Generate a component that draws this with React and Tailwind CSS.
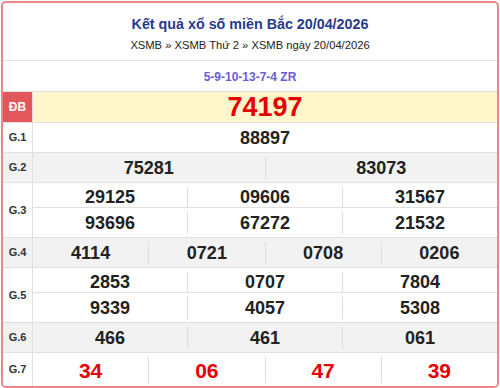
const ROW_LINE = "border-b border-[#e0e0e0]";

const prizes = [
  { label: "G.1", rows: [["88897"]], bg: "bg-white" },
  { label: "G.2", rows: [["75281", "83073"]], bg: "bg-[#f2f2f2]" },
  { label: "G.3", rows: [["29125", "09606", "31567"], ["93696", "67272", "21532"]], bg: "bg-white" },
  { label: "G.4", rows: [["4114", "0721", "0708", "0206"]], bg: "bg-[#f2f2f2]" },
  { label: "G.5", rows: [["2853", "0707", "7804"], ["9339", "4057", "5308"]], bg: "bg-white" },
  { label: "G.6", rows: [["466", "461", "061"]], bg: "bg-[#f2f2f2]" },
  { label: "G.7", rows: [["34", "06", "47", "39"]], bg: "bg-white", red: true, last: true },
];

const Cell = ({ value, first, red, top }) => (
  <div
    className={`flex-1 flex items-center justify-center mt-1 ${top ? "mb-0" : "mb-[3px]"} ${
      first ? "" : "border-l border-[#dddddd]"
    }`}
  >
    <span
      className={
        red
          ? "text-[21px] font-bold text-[#e60000] leading-none"
          : "text-[18px] font-bold text-[#222222] leading-none"
      }
    >
      {value}
    </span>
  </div>
);

const PrizeRow = ({ prize }) => {
  const double = prize.rows.length > 1;
  const height = double ? "h-[55px]" : prize.last ? "h-[33px]" : "h-[30px]";
  return (
    <div className={`flex ${height} ${prize.bg} ${prize.last ? "" : ROW_LINE}`}>
      <div className="w-[30px] shrink-0 flex items-center justify-center border-r border-[#e0e0e0] text-[11px] font-bold text-[#333333]">
        {prize.label}
      </div>
      <div className="flex-1 flex flex-col">
        {prize.rows.map((row, i) => (
          <div
            key={i}
            className={`flex ${double && i === 0 ? "h-[25px] border-b border-[#e0e0e0]" : "flex-1"}`}
          >
            {row.map((v, j) => (
              <Cell key={j} value={v} first={j === 0} red={prize.red} top={double && i === 0} />
            ))}
          </div>
        ))}
      </div>
    </div>
  );
};

export default function App() {
  return (
    <div className="w-[500px] h-[388px] bg-white pt-px pl-px" style={{ fontFamily: '"Liberation Sans", Arial, sans-serif' }}>
      <div className="w-[498px] h-[387px] border-2 border-[#ef8585] rounded-[5px] overflow-hidden flex flex-col">
        <div className={`h-[58px] shrink-0 flex flex-col items-center ${ROW_LINE}`}>
          <h1 className="mt-[11px] text-[14.3px] font-bold text-[#283a8e] leading-5">
            Kết quả xổ số miền Bắc 20/04/2026
          </h1>
          <p className="mt-[3px] text-[11.2px] text-[#222222] leading-4">
            XSMB » XSMB Thứ 2 » XSMB ngày 20/04/2026
          </p>
        </div>
        <div className={`h-[31px] shrink-0 flex items-center justify-center ${ROW_LINE}`}>
          <span className="text-[12px] font-bold text-[#6a5cd6] pt-px">5-9-10-13-7-4 ZR</span>
        </div>
        <div className={`h-[31px] shrink-0 flex ${ROW_LINE}`}>
          <div className="w-[30px] shrink-0 flex items-center justify-center bg-[#e2575c] border-r border-[#e0e0e0] text-[12px] font-bold text-white">
            ĐB
          </div>
          <div className="flex-1 flex items-center justify-center bg-[#fff6cc]">
            <span className="text-[27px] font-bold text-[#e60000] leading-none">74197</span>
          </div>
        </div>
        {prizes.map((p) => (
          <PrizeRow key={p.label} prize={p} />
        ))}
      </div>
    </div>
  );
}
